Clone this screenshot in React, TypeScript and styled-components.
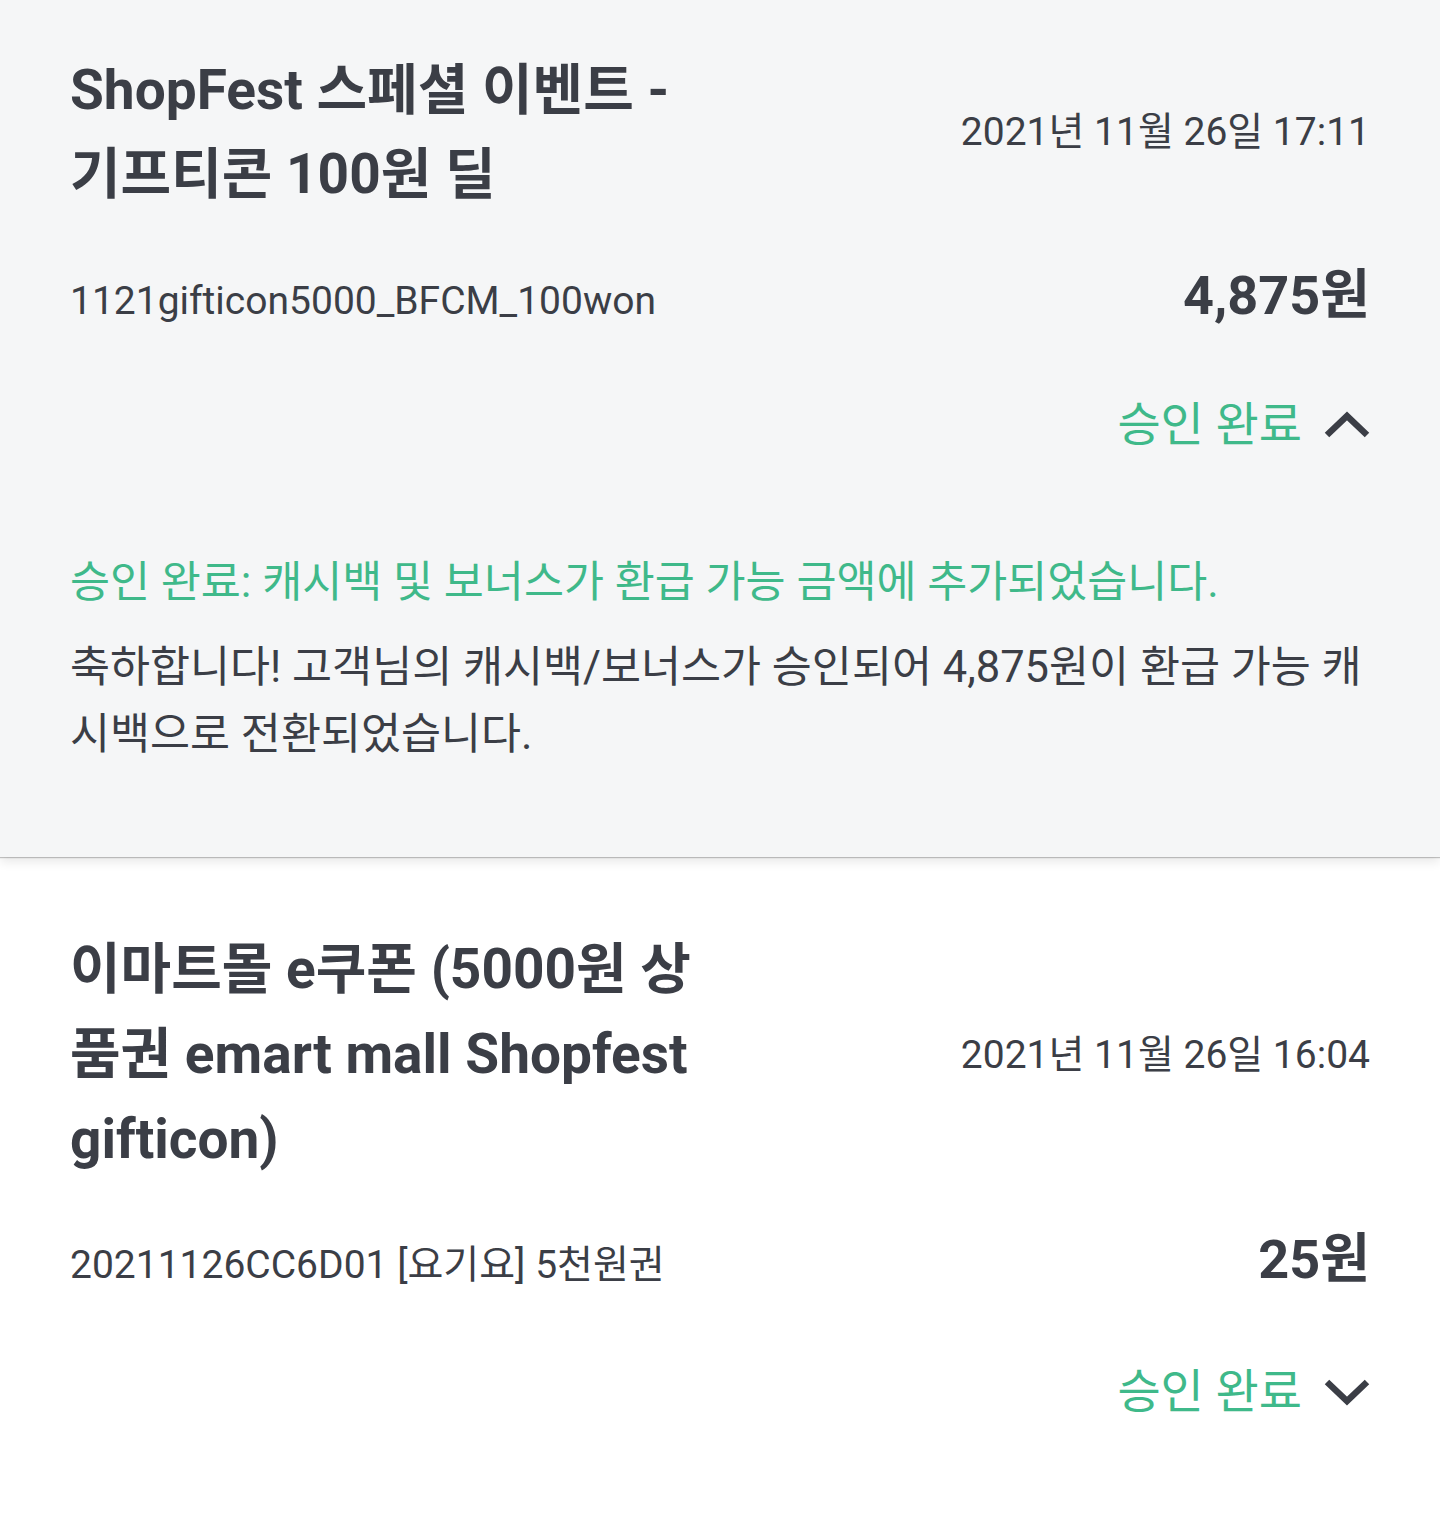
import React from "react";
import styled, { createGlobalStyle } from "styled-components";

const Global = createGlobalStyle`
  html, body { margin: 0; padding: 0; background: #ffffff; }
  body {
    font-family: Roboto, "Noto Sans CJK KR", "Noto Sans", sans-serif;
    color: #3b3e46;
    -webkit-font-smoothing: antialiased;
  }
`;

const Page = styled.div`
  width: 1440px;
  min-height: 1534px;
  background: #ffffff;
  display: flex;
  flex-direction: column;
`;

const Card = styled.section<{ $expanded?: boolean; $top: number }>`
  position: relative;
  z-index: ${(p) => (p.$expanded ? 1 : 0)};
  background: ${(p) => (p.$expanded ? "#f5f6f7" : "#ffffff")};
  padding: ${(p) => p.$top}px 70px ${(p) => (p.$expanded ? 89 : 60)}px 70px;
  box-shadow: ${(p) =>
    p.$expanded
      ? "0 1px 1px rgba(0,0,0,0.22), 0 5px 10px rgba(0,0,0,0.09)"
      : "none"};
  display: flex;
  flex-direction: column;
`;

const HeaderRow = styled.div`
  display: flex;
  justify-content: space-between;
  align-items: center;
`;

const Title = styled.h2<{ $lh: number }>`
  margin: 0;
  max-width: 640px;
  font-size: 55px;
  font-weight: 700;
  line-height: ${(p) => p.$lh}px;
  color: #3b3e46;
`;

const DateText = styled.div`
  font-size: 39px;
  line-height: 60px;
  color: #3b3e46;
  white-space: nowrap;
`;

const InfoRow = styled.div<{ $gap: number }>`
  margin-top: ${(p) => p.$gap}px;
  display: flex;
  justify-content: space-between;
  align-items: baseline;
`;

const Code = styled.div`
  font-size: 39px;
  line-height: 60px;
  color: #3b3e46;
`;

const Amount = styled.div`
  font-size: 54px;
  font-weight: 700;
  line-height: 60px;
  color: #3b3e46;
`;

const StatusRow = styled.div<{ $gap: number }>`
  margin-top: ${(p) => p.$gap}px;
  display: flex;
  justify-content: flex-end;
  align-items: center;
  gap: 22px;
  height: 60px;
`;

const StatusLabel = styled.span`
  font-size: 47px;
  line-height: 60px;
  color: #3fb98a;
`;

const Chevron = styled.svg`
  width: 46px;
  height: 28px;
  display: block;
`;

const Message = styled.div`
  margin-top: 94px;
  display: flex;
  flex-direction: column;
  gap: 18px;
`;

const MessageHead = styled.p`
  margin: 0;
  font-size: 43.5px;
  line-height: 67px;
  color: #3fb98a;
`;

const MessageBody = styled.p`
  margin: 0;
  font-size: 43.5px;
  line-height: 67px;
  color: #3b3e46;
`;

const ChevronIcon = ({ up }: { up: boolean }) => (
  <Chevron viewBox="0 0 46 28" aria-hidden>
    <polyline
      points={up ? "3,24 23,5 43,24" : "3,4 23,23 43,4"}
      fill="none"
      stroke="#3b3e46"
      strokeWidth="6.5"
      strokeLinecap="butt"
      strokeLinejoin="miter"
    />
  </Chevron>
);

export default function App() {
  return (
    <Page>
      <Global />
      <Card $expanded $top={48}>
        <HeaderRow>
          <Title $lh={84}>ShopFest 스페셜 이벤트 - 기프티콘 100원 딜</Title>
          <DateText>2021년 11월 26일 17:11</DateText>
        </HeaderRow>
        <InfoRow $gap={50}>
          <Code>1121gifticon5000_BFCM_100won</Code>
          <Amount>4,875원</Amount>
        </InfoRow>
        <StatusRow $gap={64}>
          <StatusLabel>승인 완료</StatusLabel>
          <ChevronIcon up />
        </StatusRow>
        <Message>
          <MessageHead>
            승인 완료: 캐시백 및 보너스가 환급 가능 금액에 추가되었습니다.
          </MessageHead>
          <MessageBody>
            축하합니다! 고객님의 캐시백/보너스가 승인되어 4,875원이 환급 가능
            캐시백으로 전환되었습니다.
          </MessageBody>
        </Message>
      </Card>
      <Card $top={70}>
        <HeaderRow>
          <Title $lh={85}>
            이마트몰 e쿠폰 (5000원 상품권 emart mall Shopfest gifticon)
          </Title>
          <DateText>2021년 11월 26일 16:04</DateText>
        </HeaderRow>
        <InfoRow $gap={48}>
          <Code>20211126CC6D01 [요기요] 5천원권</Code>
          <Amount>25원</Amount>
        </InfoRow>
        <StatusRow $gap={67}>
          <StatusLabel>승인 완료</StatusLabel>
          <ChevronIcon up={false} />
        </StatusRow>
      </Card>
    </Page>
  );
}
